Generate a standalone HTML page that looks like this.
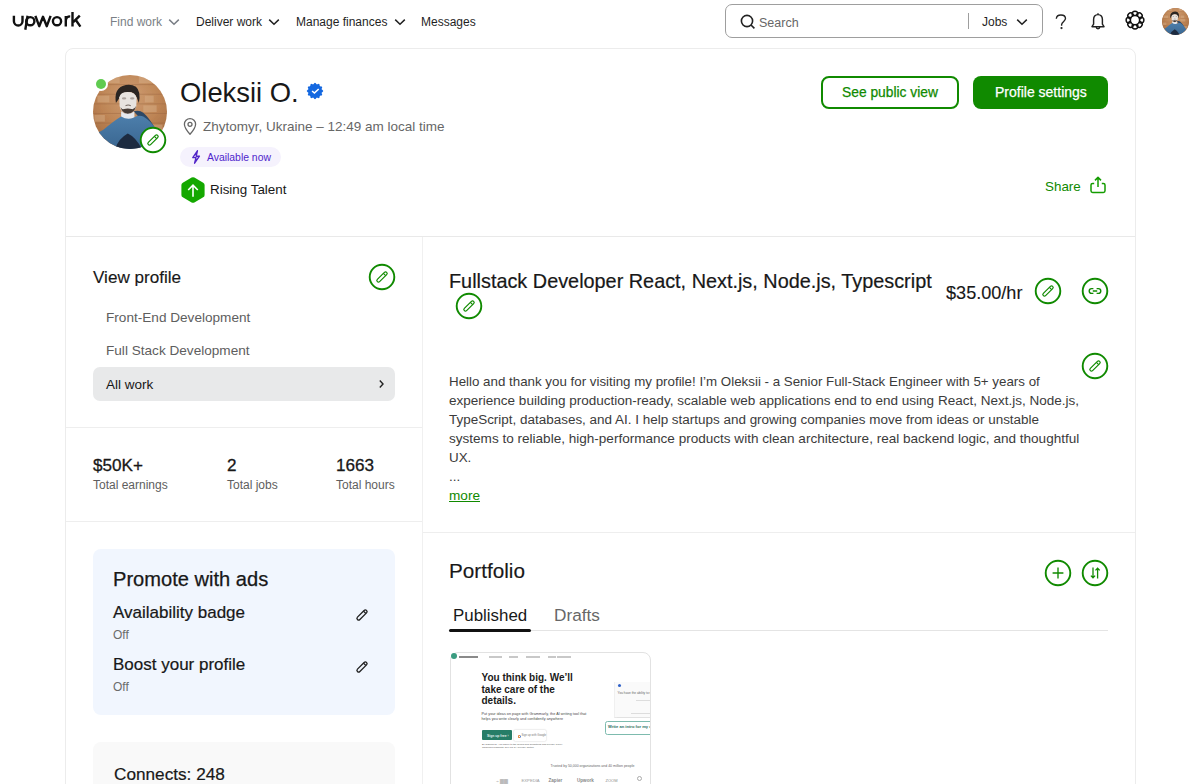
<!DOCTYPE html>
<html><head><meta charset="utf-8">
<style>
*{box-sizing:border-box;margin:0;padding:0}
html,body{width:1200px;height:784px;overflow:hidden;background:#fff;font-family:"Liberation Sans",sans-serif;color:#181818}
.a{position:absolute;white-space:nowrap}
.nav{font-size:12px;color:#1f1f1f}
.circ{position:absolute;width:26.5px;height:26.5px;border:1.7px solid #108a00;border-radius:50%;background:#fff}
.circ svg{position:absolute;left:50%;top:50%;transform:translate(-50%,-50%)}
.hr{position:absolute;background:#e9e9e9;height:1px}
</style></head>
<body>
<svg width="0" height="0" style="position:absolute"><defs>
<radialGradient id="bg1" cx="0.5" cy="0.3" r="0.7"><stop offset="0" stop-color="#cf9f74"/><stop offset="0.6" stop-color="#bd8455"/><stop offset="1" stop-color="#a56e43"/></radialGradient>
<linearGradient id="hood" x1="0" y1="0" x2="0" y2="1"><stop offset="0" stop-color="#4c7eab"/><stop offset="1" stop-color="#3a6690"/></linearGradient>
<clipPath id="avc"><circle cx="50" cy="50" r="50"/></clipPath>
<symbol id="av" viewBox="0 0 100 100"><g clip-path="url(#avc)">
<rect width="100" height="100" fill="url(#bg1)"/>
<g stroke="#94603c" stroke-width="1.1" opacity="0.45"><path d="M0 13H100M0 26H100M0 39H100M0 52H100M0 65H100M0 78H100"/></g>
<g fill="#dcb792" opacity="0.4"><rect x="6" y="28" width="16" height="9"/><rect x="68" y="41" width="18" height="9"/><rect x="62" y="2" width="18" height="9"/><rect x="2" y="54" width="14" height="9"/><rect x="78" y="67" width="16" height="9"/><rect x="20" y="2" width="16" height="9"/><rect x="70" y="28" width="12" height="9"/></g>
<path d="M31 38Q28 20 40 15Q50 11 58 16Q65 22 62 38L59 30Q55 22 47 23Q38 24 35 32Z" fill="#2a2522"/>
<path d="M35.5 30Q37 23 47 23Q57 23 59 31L58.5 42Q57 51 47 52Q37 51 36 42Z" fill="#e7e3df"/>
<ellipse cx="42" cy="31.5" rx="3" ry="1.6" fill="#7a6d66" opacity="0.55"/><ellipse cx="53" cy="31.5" rx="3" ry="1.6" fill="#7a6d66" opacity="0.55"/><path d="M44 41.5Q47.5 39.5 51 41.5" stroke="#5a4e46" stroke-width="1.4" fill="none" opacity="0.8"/>
<path d="M37 42Q38 51 47 53Q57 51 58 42Q56 47 52 46Q47 44.5 42 46Q38 47 37 42Z" fill="#463b35"/>
<path d="M38 49Q47 56 56 49L56 58L47 60L38 58Z" fill="#e4e8ee"/>
<path d="M55 49Q63 47 68 51Q76 58 84 72L70 66Z" fill="#2c4866"/>
<path d="M2 100L4 82Q8 76 14 74Q28 62 38 56Q47 62 56 57Q62 54 68 56Q78 62 86 74Q92 80 96 90L98 100Z" fill="url(#hood)"/>
<path d="M30 100Q34 86 47 79Q58 84 66 100Z" fill="#1d2b40"/>
</g></symbol></defs></svg>
<!-- HEADER -->
<svg class="a" style="left:0;top:0" width="90" height="40" viewBox="0 0 90 40" fill="none" stroke="#111" stroke-width="2.4" stroke-linecap="butt">
<path d="M13.9 15.8V21.2A4.3 4.3 0 0 0 22.5 21.2V15.8"/>
<path d="M27.6 15.8L25.3 29.8"/>
<circle cx="30.3" cy="21.2" r="4.1"/>
<path d="M35.4 15.8L39.2 26.2L43 16.8L46.8 26.2L50.6 15.8" stroke-linejoin="round"/>
<circle cx="57" cy="21.2" r="4.1"/>
<path d="M65.8 26.6V16M65.8 20.6Q66.2 16.4 70.2 16.4"/>
<path d="M72.5 12V26.6M79.8 15.6L73.2 22.2M75.6 19.8L80.4 26.6"/>
</svg>
<div class="a nav" style="left:110px;top:15px;color:#7a7f86">Find work</div>
<svg class="a" style="left:167.5px;top:18px" width="12" height="8" viewBox="0 0 12 8"><path d="M1.2 1.6L6 6.2L10.8 1.6" fill="none" stroke="#7a7f86" stroke-width="1.5"/></svg>
<div class="a nav" style="left:196px;top:15px">Deliver work</div>
<svg class="a" style="left:267.5px;top:18px" width="12" height="8" viewBox="0 0 12 8"><path d="M1.2 1.6L6 6.2L10.8 1.6" fill="none" stroke="#222" stroke-width="1.5"/></svg>
<div class="a nav" style="left:296px;top:15px">Manage finances</div>
<svg class="a" style="left:393.5px;top:18px" width="12" height="8" viewBox="0 0 12 8"><path d="M1.2 1.6L6 6.2L10.8 1.6" fill="none" stroke="#222" stroke-width="1.5"/></svg>
<div class="a nav" style="left:421px;top:15px">Messages</div>

<div class="a" style="left:725px;top:4px;width:318px;height:34px;border:1px solid #9e9e9e;border-radius:7px"></div>
<div class="a nav" style="left:759px;top:16px;font-size:12.5px;color:#676767">Search</div>
<div class="a" style="left:968px;top:13px;width:1px;height:16px;background:#9e9e9e"></div>
<div class="a nav" style="left:982px;top:15px">Jobs</div>
<svg class="a" style="left:1015.5px;top:17.5px" width="12" height="8" viewBox="0 0 12 8"><path d="M1.2 1.6L6 6.2L10.8 1.6" fill="none" stroke="#222" stroke-width="1.5"/></svg>
<svg class="a" style="left:738.5px;top:12.5px" width="18" height="18" viewBox="0 0 18 18"><circle cx="8" cy="8" r="5.6" fill="none" stroke="#222" stroke-width="1.6"/><path d="M12 12L15.4 15.4" stroke="#222" stroke-width="1.6"/></svg>
<svg class="a" style="left:1052px;top:11px" width="18" height="20" viewBox="0 0 18 20" fill="none" stroke="#222" stroke-width="1.35"><path d="M4.3 7.8C4.5 5.3 6.3 4 8.9 4C11.5 4 13.5 5.3 13.5 7.6C13.5 10 9.9 10.8 9.6 13.6V14.8"/><circle cx="9.5" cy="17.1" r="0.45" fill="#222"/></svg>
<svg class="a" style="left:1088px;top:10px" width="20" height="22" viewBox="0 0 20 22" fill="none" stroke="#222" stroke-width="1.45" stroke-linejoin="round"><path d="M10 4.6C7 4.6 5.6 6.8 5.6 9.6V14.2L4 16.7H16L14.4 14.2V9.6C14.4 6.8 13 4.6 10 4.6Z"/><path d="M10 3.3V4.6"/><path d="M8.3 17.1A1.7 1.7 0 0 0 11.7 17.1"/></svg>
<svg class="a" style="left:1123px;top:8px" width="24" height="24" viewBox="0 0 24 24" fill="none" stroke="#111" stroke-width="1.45"><g transform="translate(12 12.1)"><circle cx="0" cy="-6.0" r="2.9" transform="rotate(0)"/><circle cx="0" cy="-6.0" r="2.9" transform="rotate(45)"/><circle cx="0" cy="-6.0" r="2.9" transform="rotate(90)"/><circle cx="0" cy="-6.0" r="2.9" transform="rotate(135)"/><circle cx="0" cy="-6.0" r="2.9" transform="rotate(180)"/><circle cx="0" cy="-6.0" r="2.9" transform="rotate(225)"/><circle cx="0" cy="-6.0" r="2.9" transform="rotate(270)"/><circle cx="0" cy="-6.0" r="2.9" transform="rotate(315)"/><circle r="4.3" fill="#fff" stroke="none"/><circle r="4.6"/></g></svg>
<div class="a" style="left:1161.5px;top:7.5px;width:27px;height:27px;border-radius:50%;overflow:hidden;background:#b07a50"><svg width="27" height="27"><use href="#av"/></svg></div>

<!-- CARD -->
<div class="a" style="left:65px;top:48px;width:1071px;height:760px;border:1px solid #ececec;border-radius:8px"></div>
<div class="hr" style="left:66px;top:236px;width:1069px"></div>
<div class="a" style="left:422px;top:237px;width:1px;height:560px;background:#f0f0f0"></div>

<svg class="a" style="left:93px;top:75px" width="74" height="74"><use href="#av"/></svg>
<div class="a" style="left:94px;top:77px;width:14px;height:14px;border-radius:50%;background:#fff"></div>
<div class="a" style="left:96px;top:79px;width:10px;height:10px;border-radius:50%;background:#5fcb50"></div>
<svg class="a" style="left:138.00px;top:125.00px" width="30" height="30" viewBox="0 0 30 30" fill="none" stroke="#108a00"><circle cx="15" cy="15" r="12.3" fill="#fff" stroke-width="1.9"/><g transform="rotate(-45 15 15)" stroke-width="1.2"><rect x="8.4" y="13.4" width="13.2" height="3.2" rx="1.6"/><path d="M18.6 13.4V16.6"/></g></svg>
<div class="a" style="left:180px;top:77px;font-size:27.4px;color:#181818">Oleksii O.</div>
<svg class="a" style="left:305.2px;top:81.4px" width="20" height="20" viewBox="0 0 20 20"><polygon points="10.00,1.80 10.42,1.94 10.81,2.29 11.15,2.74 11.46,3.13 11.79,3.34 12.17,3.32 12.63,3.14 13.15,2.92 13.67,2.80 14.10,2.90 14.40,3.23 14.56,3.73 14.62,4.29 14.70,4.78 14.88,5.12 15.22,5.30 15.71,5.38 16.27,5.44 16.77,5.60 17.10,5.90 17.20,6.33 17.08,6.85 16.86,7.37 16.68,7.83 16.66,8.21 16.87,8.54 17.26,8.85 17.71,9.19 18.06,9.58 18.20,10.00 18.06,10.42 17.71,10.81 17.26,11.15 16.87,11.46 16.66,11.79 16.68,12.17 16.86,12.63 17.08,13.15 17.20,13.67 17.10,14.10 16.77,14.40 16.27,14.56 15.71,14.62 15.22,14.70 14.88,14.88 14.70,15.22 14.62,15.71 14.56,16.27 14.40,16.77 14.10,17.10 13.67,17.20 13.15,17.08 12.63,16.86 12.17,16.68 11.79,16.66 11.46,16.87 11.15,17.26 10.81,17.71 10.42,18.06 10.00,18.20 9.58,18.06 9.19,17.71 8.85,17.26 8.54,16.87 8.21,16.66 7.83,16.68 7.37,16.86 6.85,17.08 6.33,17.20 5.90,17.10 5.60,16.77 5.44,16.27 5.38,15.71 5.30,15.22 5.12,14.88 4.78,14.70 4.29,14.62 3.73,14.56 3.23,14.40 2.90,14.10 2.80,13.67 2.92,13.15 3.14,12.63 3.32,12.17 3.34,11.79 3.13,11.46 2.74,11.15 2.29,10.81 1.94,10.42 1.80,10.00 1.94,9.58 2.29,9.19 2.74,8.85 3.13,8.54 3.34,8.21 3.32,7.83 3.14,7.37 2.92,6.85 2.80,6.33 2.90,5.90 3.23,5.60 3.73,5.44 4.29,5.38 4.78,5.30 5.12,5.12 5.30,4.78 5.38,4.29 5.44,3.73 5.60,3.23 5.90,2.90 6.33,2.80 6.85,2.92 7.37,3.14 7.83,3.32 8.21,3.34 8.54,3.13 8.85,2.74 9.19,2.29 9.58,1.94" fill="#1468e0"/><path d="M7.1 10L9.4 12L13.7 8" fill="none" stroke="#fff" stroke-width="1.6"/></svg>
<svg class="a" style="left:182px;top:117px" width="16" height="19" viewBox="0 0 16 19" fill="none" stroke="#676767" stroke-width="1.3"><path d="M8 17.2C8 17.2 2.4 11 2.4 7.2A5.6 5.6 0 0 1 13.6 7.2C13.6 11 8 17.2 8 17.2Z" stroke-linejoin="round"/><circle cx="8" cy="7.3" r="2"/></svg>
<svg class="a" style="left:181px;top:177px" width="24" height="26" viewBox="0 0 24 26"><path d="M10.6 0.6Q12 -0.2 13.4 0.6L22.2 5.7Q23.6 6.5 23.6 8.1V17.9Q23.6 19.5 22.2 20.3L13.4 25.4Q12 26.2 10.6 25.4L1.8 20.3Q0.4 19.5 0.4 17.9V8.1Q0.4 6.5 1.8 5.7Z" fill="#14a800"/><path d="M12 19.8V8.4M7.2 13L12 8.2L16.8 13" fill="none" stroke="#fff" stroke-width="1.6"/></svg>
<div class="a" style="left:203px;top:118.5px;font-size:13.5px;color:#676767">Zhytomyr, Ukraine – 12:49 am local time</div>
<div class="a" style="left:180px;top:147px;width:101px;height:20px;border-radius:10px;background:#f5f2fd"></div>
<div class="a" style="left:207px;top:151.5px;font-size:10.4px;color:#4f25cc">Available now</div>
<svg class="a" style="left:190px;top:149px" width="12" height="16" viewBox="0 0 12 16"><path d="M7.4 1.8L2.8 8.6H6L4.6 14.2L9.4 7.2H6.2Z" fill="none" stroke="#5225c8" stroke-width="1.4" stroke-linejoin="round"/></svg>
<div class="a" style="left:210px;top:182px;font-size:13.4px;color:#181818">Rising Talent</div>

<div class="a" style="left:821px;top:76px;width:138px;height:33px;border:2px solid #108a00;border-radius:8px"></div>
<div class="a" style="left:842px;top:84.5px;font-size:13.8px;color:#108a00;-webkit-text-stroke:0.25px #108a00">See public view</div>
<div class="a" style="left:973px;top:76px;width:135px;height:33px;background:#108a00;border-radius:8px"></div>
<div class="a" style="left:995px;top:83.8px;font-size:14px;color:#fff;-webkit-text-stroke:0.25px #fff">Profile settings</div>
<div class="a" style="left:1045px;top:179px;font-size:13.4px;color:#108a00">Share</div>
<svg class="a" style="left:1088px;top:175px" width="20" height="20" viewBox="0 0 20 20" fill="none" stroke="#149c00" stroke-width="1.5" stroke-linejoin="round"><path d="M6.2 8.4H4.6Q3 8.4 3 10V15.8Q3 17.4 4.6 17.4H15.4Q17 17.4 17 15.8V10Q17 8.4 15.4 8.4H13.8"/><path d="M10 12V2.6M7 5.4L10 2.4L13 5.4"/></svg>

<!-- LEFT COLUMN -->
<div class="a" style="left:93px;top:267.8px;font-size:17.1px;-webkit-text-stroke:0.15px #181818">View profile</div>
<svg class="a" style="left:367.35px;top:261.80px" width="30" height="30" viewBox="0 0 30 30" fill="none" stroke="#108a00"><circle cx="15" cy="15" r="12.3" fill="#fff" stroke-width="1.9"/><g transform="rotate(-45 15 15)" stroke-width="1.2"><rect x="8.4" y="13.4" width="13.2" height="3.2" rx="1.6"/><path d="M18.6 13.4V16.6"/></g></svg>
<div class="a" style="left:106px;top:309.5px;font-size:13.6px;color:#5e5e5e">Front-End Development</div>
<div class="a" style="left:106px;top:342.5px;font-size:13.6px;color:#5e5e5e">Full Stack Development</div>
<div class="a" style="left:93px;top:367px;width:302.3px;height:33.7px;background:#e8e9ea;border-radius:7px"></div>
<div class="a" style="left:106px;top:377px;font-size:13.5px;color:#181818">All work</div>
<svg class="a" style="left:376px;top:378px" width="10" height="12" viewBox="0 0 10 12"><path d="M3.8 2.6L7 6L3.8 9.4" fill="none" stroke="#222" stroke-width="1.4"/></svg>
<div class="hr" style="left:66px;top:427px;width:356px;background:#eeeeee"></div>
<div class="a" style="left:93px;top:456px;font-size:17.1px;-webkit-text-stroke:0.3px #181818">$50K+</div>
<div class="a" style="left:93px;top:478px;font-size:12px;color:#5e5e5e">Total earnings</div>
<div class="a" style="left:227px;top:456px;font-size:17.1px;-webkit-text-stroke:0.3px #181818">2</div>
<div class="a" style="left:227px;top:478px;font-size:12px;color:#5e5e5e">Total jobs</div>
<div class="a" style="left:336px;top:456px;font-size:17.1px;-webkit-text-stroke:0.3px #181818">1663</div>
<div class="a" style="left:336px;top:478px;font-size:12px;color:#5e5e5e">Total hours</div>
<div class="hr" style="left:66px;top:521px;width:356px;background:#eeeeee"></div>
<div class="a" style="left:93px;top:549px;width:302.3px;height:166px;background:#f1f6fe;border-radius:8px"></div>
<div class="a" style="left:113px;top:568px;font-size:20.1px;-webkit-text-stroke:0.25px #181818">Promote with ads</div>
<div class="a" style="left:113px;top:603px;font-size:17px;-webkit-text-stroke:0.2px #181818">Availability badge</div>
<svg class="a" style="left:352.2px;top:604.7px" width="20" height="20" viewBox="0 0 20 20"><g transform="rotate(-45 10 10)" fill="none" stroke="#222" stroke-width="1.35"><rect x="3.6" y="8.3" width="12.8" height="3.4" rx="1.7"/><path d="M13.8 8.3V11.7"/></g></svg>
<div class="a" style="left:113px;top:628px;font-size:12px;color:#6b6b6b">Off</div>
<div class="a" style="left:113px;top:655px;font-size:17px;-webkit-text-stroke:0.2px #181818">Boost your profile</div>
<svg class="a" style="left:352.2px;top:656.8px" width="20" height="20" viewBox="0 0 20 20"><g transform="rotate(-45 10 10)" fill="none" stroke="#222" stroke-width="1.35"><rect x="3.6" y="8.3" width="12.8" height="3.4" rx="1.7"/><path d="M13.8 8.3V11.7"/></g></svg>
<div class="a" style="left:113px;top:680px;font-size:12px;color:#6b6b6b">Off</div>
<div class="a" style="left:93px;top:742px;width:302.3px;height:80px;background:#f9f9f9;border-radius:8px"></div>
<div class="a" style="left:114px;top:764px;font-size:17.2px;-webkit-text-stroke:0.2px #181818">Connects: 248</div>

<!-- RIGHT COLUMN -->
<div class="a" style="left:449px;top:270px;font-size:19.85px;-webkit-text-stroke:0.2px #181818">Fullstack Developer React, Next.js, Node.js, Typescript</div>
<div class="a" style="left:946px;top:283px;font-size:18.1px;-webkit-text-stroke:0.12px #181818">$35.00/hr</div>
<svg class="a" style="left:454.40px;top:291.25px" width="30" height="30" viewBox="0 0 30 30" fill="none" stroke="#108a00"><circle cx="15" cy="15" r="12.3" fill="#fff" stroke-width="1.9"/><g transform="rotate(-45 15 15)" stroke-width="1.2"><rect x="8.4" y="13.4" width="13.2" height="3.2" rx="1.6"/><path d="M18.6 13.4V16.6"/></g></svg>
<svg class="a" style="left:1032.65px;top:276.15px" width="30" height="30" viewBox="0 0 30 30" fill="none" stroke="#108a00"><circle cx="15" cy="15" r="12.3" fill="#fff" stroke-width="1.9"/><g transform="rotate(-45 15 15)" stroke-width="1.2"><rect x="8.4" y="13.4" width="13.2" height="3.2" rx="1.6"/><path d="M18.6 13.4V16.6"/></g></svg>
<svg class="a" style="left:1079.65px;top:276.15px" width="30" height="30" viewBox="0 0 30 30" fill="none" stroke="#108a00"><circle cx="15" cy="15" r="12.3" fill="#fff" stroke-width="1.9"/><path stroke-width="1.4" d="M13.4 12.6H11.6A2.4 2.4 0 0 0 11.6 17.4H13.4M16.6 12.6H18.4A2.4 2.4 0 0 1 18.4 17.4H16.6M12.8 15H17.2"/></svg>
<svg class="a" style="left:1079.70px;top:351.30px" width="30" height="30" viewBox="0 0 30 30" fill="none" stroke="#108a00"><circle cx="15" cy="15" r="12.3" fill="#fff" stroke-width="1.9"/><g transform="rotate(-45 15 15)" stroke-width="1.2"><rect x="8.4" y="13.4" width="13.2" height="3.2" rx="1.6"/><path d="M18.6 13.4V16.6"/></g></svg>
<div class="a" style="left:449px;top:372px;font-size:13.33px;line-height:19px;color:#3b3b3b">Hello and thank you for visiting my profile! I’m Oleksii - a Senior Full-Stack Engineer with 5+ years of</div>
<div class="a" style="left:449px;top:391px;font-size:13.52px;line-height:19px;color:#3b3b3b">experience building production-ready, scalable web applications end to end using React, Next.js, Node.js,</div>
<div class="a" style="left:449px;top:410px;font-size:13.46px;line-height:19px;color:#3b3b3b">TypeScript, databases, and AI. I help startups and growing companies move from ideas or unstable</div>
<div class="a" style="left:449px;top:429px;font-size:13.56px;line-height:19px;color:#3b3b3b">systems to reliable, high-performance products with clean architecture, real backend logic, and thoughtful</div>
<div class="a" style="left:449px;top:448px;font-size:13.4px;line-height:19px;color:#3b3b3b">UX.</div>
<div class="a" style="left:449px;top:467px;font-size:13.4px;line-height:19px;color:#3b3b3b">...</div>
<div class="a" style="left:449px;top:486px;font-size:13.6px;line-height:19px;color:#108a00;text-decoration:underline">more</div>
<div class="hr" style="left:423px;top:532px;width:712px;background:#eeeeee"></div>
<div class="a" style="left:449px;top:559px;font-size:20.7px;-webkit-text-stroke:0.15px #181818">Portfolio</div>
<svg class="a" style="left:1042.85px;top:557.90px" width="30" height="30" viewBox="0 0 30 30" fill="none" stroke="#108a00"><circle cx="15" cy="15" r="12.3" fill="#fff" stroke-width="1.9"/><path stroke-width="1.35" d="M15 9.6V20.4M9.6 15H20.4"/></svg>
<svg class="a" style="left:1079.50px;top:557.90px" width="30" height="30" viewBox="0 0 30 30" fill="none" stroke="#108a00"><circle cx="15" cy="15" r="12.3" fill="#fff" stroke-width="1.9"/><path stroke-width="1.3" d="M13 9.6V19.6M10.9 17.6L13 19.8L15.1 17.6M17.6 20.4V10.4M15.5 12.4L17.6 10.2L19.7 12.4"/></svg>
<div class="a" style="left:453px;top:605.5px;font-size:16.9px">Published</div>
<div class="a" style="left:554px;top:605px;font-size:17.2px;color:#676767">Drafts</div>
<div class="hr" style="left:449px;top:630px;width:659px;background:#e4e4e4"></div>
<div class="a" style="left:449px;top:629px;width:82px;height:3px;background:#111;border-radius:2px"></div>
<div class="a" style="left:449.5px;top:651.5px;width:201px;height:150px;border:1px solid #e2e2e2;border-radius:8px;background:#fff;overflow:hidden">

<div class="a" style="left:8.5px;top:3.3px;width:19px;height:2.2px;background:#8a8a8a"></div>
<div class="a" style="left:38.5px;top:3.5px;width:13px;height:2px;background:#c8c8c8"></div>
<div class="a" style="left:58.5px;top:3.5px;width:9px;height:2px;background:#c8c8c8"></div>
<div class="a" style="left:75.5px;top:3.5px;width:14px;height:2px;background:#c8c8c8"></div>
<div class="a" style="left:97.5px;top:3.5px;width:8px;height:2px;background:#c8c8c8"></div>
<div class="a" style="left:106.5px;top:3.5px;width:14px;height:2px;background:#c8c8c8"></div>
<div class="a" style="left:31.0px;top:19.6px;font-size:10px;line-height:11.5px;font-weight:bold;color:#1a1a1a;white-space:pre">You think big. We’ll
take care of the
details.</div>
<div class="a" style="left:31.0px;top:60.6px;font-size:3.7px;line-height:1;color:#444;letter-spacing:0.05px">Put your ideas on page with Grammarly, the AI writing tool that</div>
<div class="a" style="left:31.0px;top:65.4px;font-size:3.7px;line-height:1;color:#444;letter-spacing:0.05px">helps you write clearly and confidently anywhere</div>
<div class="a" style="left:31.5px;top:77.9px;width:29.6px;height:9.8px;background:#267d67;border-radius:1px"></div>
<div class="a" style="left:36.5px;top:82px;font-size:3.4px;line-height:1;color:#e0efe9;font-weight:bold">Sign up free  ›</div>
<div class="a" style="left:63.9px;top:77.7px;width:32px;height:10.4px;background:#fff;box-shadow:0 0 1.5px rgba(0,0,0,.3);border-radius:1px"></div>
<div class="a" style="left:67.0px;top:82.6px;width:3px;height:3px;border-radius:50%;border:0.8px solid #e0823a;border-right-color:#3c7de0"></div>
<div class="a" style="left:71px;top:82px;font-size:2.75px;line-height:1;color:#777;">Sign up with Google</div>
<div class="a" style="left:31.5px;top:91px;font-size:2.5px;line-height:1;color:#555;">By signing up, you agree to the Terms and Conditions and Privacy Policy</div>
<div class="a" style="left:31.5px;top:94.6px;font-size:2.5px;line-height:1;color:#555;">California residents, see our CA Privacy Notice</div>
<div class="a" style="left:163.3px;top:29.1px;width:40px;height:36px;background:#fafafa;border-left:1px solid #f0f0f0;border-bottom:1px solid #e6e6e6"></div>
<div class="a" style="left:167.1px;top:31.8px;width:3px;height:3px;border-radius:50%;background:#2f62c9"></div>
<div class="a" style="left:167.1px;top:39.6px;font-size:3.2px;line-height:1;color:#666">You have the ability to make</div>
<div class="a" style="left:185.5px;top:47.5px;width:16px;height:1px;background:#dddddd"></div>
<div class="a" style="left:180.5px;top:60.5px;width:20px;height:1px;background:#dddddd"></div>
<div class="a" style="left:166.5px;top:64.0px;width:34px;height:1px;background:#e2e2e2"></div>
<div class="a" style="left:154.8px;top:68.1px;width:50px;height:14px;background:#fff;border:1px solid #7dbbae;border-radius:2.5px"></div>
<div class="a" style="left:157.6px;top:72.6px;font-size:4.1px;line-height:1;color:#2c6f60;font-weight:bold">Write an intro for my c</div>
<div class="a" style="left:100.0px;top:112.3px;font-size:3.5px;line-height:1;color:#666;">Trusted by 50,000 organizations and 40 million people</div>
<div class="a" style="left:45px;top:126.5px;font-size:5px;line-height:1;color:#bbb;">⌁ ▇▇</div><div class="a" style="left:71px;top:126.8px;font-size:4.2px;line-height:1;color:#999;">EXPEDIA</div><div class="a" style="left:98px;top:126.6px;font-size:4.6px;line-height:1;color:#888;font-weight:bold">Zapier</div><div class="a" style="left:126.5px;top:126.6px;font-size:4.6px;line-height:1;color:#888;font-weight:bold">Upwork</div><div class="a" style="left:155px;top:126.8px;font-size:4px;line-height:1;color:#888;">ZOOM</div>






<div class="a" style="left:186.5px;top:123.5px;width:5px;height:5px;border:1px solid #aaa;border-radius:50%"></div>
</div>
<div class="a" style="left:451px;top:653.3px;width:6px;height:6px;border-radius:50%;background:#3a9c80"></div>
</body></html>
